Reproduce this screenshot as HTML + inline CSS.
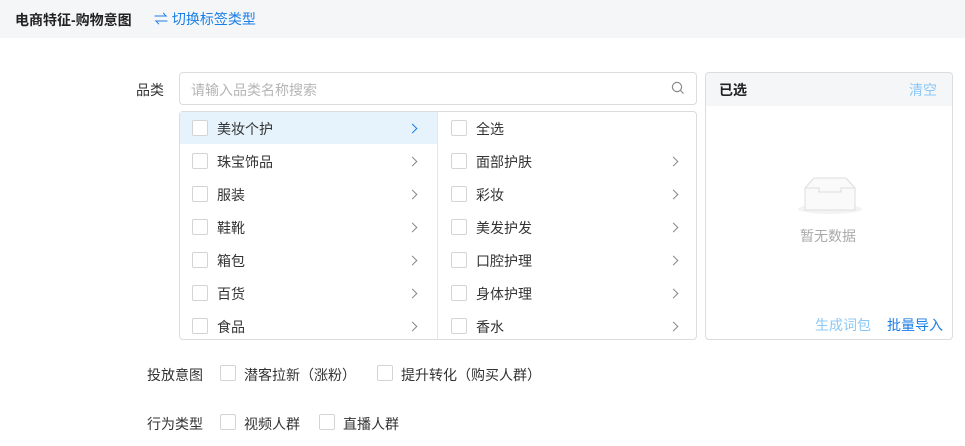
<!DOCTYPE html>
<html><head><meta charset="utf-8"><style>
*{margin:0;padding:0;box-sizing:border-box}
body{width:965px;height:446px;background:#fff;font-family:"Liberation Sans","Noto Sans CJK SC",sans-serif;font-size:14px;color:#333;position:relative;overflow:hidden}
.hdr{position:absolute;left:0;top:0;width:965px;height:38px;background:#f5f6f8}
.abs{position:absolute;white-space:nowrap}
.cb{position:absolute;width:16px;height:16px;border:1px solid #d4d4d4;border-radius:2px;background:#fff}
.arr{position:absolute;width:7px;height:7px;border-right:1.3px solid #888;border-top:1.3px solid #888;transform:rotate(45deg)}
</style></head><body>
<div class="hdr"></div>
<div class="abs" style="left:15px;top:10px;font-weight:bold;font-size:14px;color:#222">电商特征-购物意图</div>
<div class="abs" style="left:154px;top:9px;color:#1a7ee8;font-size:14px">⇌ 切换标签类型</div>
<div class="abs" style="left:136px;top:80px">品类</div>
<div class="abs" style="left:179px;top:72px;width:518px;height:33px;border:1px solid #dcdcdc;border-radius:4px"></div>
<div class="abs" style="left:191px;top:80px;color:#b5b5b5">请输入品类名称搜索</div>
<svg class="abs" style="left:671px;top:81px" width="14" height="14" viewBox="0 0 14 14"><circle cx="6" cy="6" r="4.6" fill="none" stroke="#888" stroke-width="1.2"/><line x1="9.5" y1="9.5" x2="12.5" y2="12.5" stroke="#888" stroke-width="1.2"/></svg>
<div class="abs" style="left:179px;top:111px;width:518px;height:229px;border:1px solid #dcdcdc;border-radius:4px"></div>
<div class="abs" style="left:437px;top:112px;width:1px;height:227px;background:#e6e6e6"></div>
<div class="abs" style="left:180px;top:112px;width:257px;height:32px;background:#e6f3fc"></div>
<div id="rows"></div>
<div class="abs" style="left:705px;top:72px;width:248px;height:268px;border:1px solid #dcdcdc;border-radius:4px;overflow:hidden"><div style="height:33px;background:#f5f6f8"></div></div>
<div class="abs" style="left:719px;top:80px;font-weight:bold;color:#222">已选</div>
<div class="abs" style="left:909px;top:80px;color:#8cc8f5">清空</div>
<svg class="abs" style="left:796px;top:175px" width="68" height="40" viewBox="0 0 68 40"><ellipse cx="34" cy="34" rx="32" ry="5" fill="#f3f3f3"/><path d="M9 13 L18 3 H50 L59 13 V35 H9 Z" fill="#fafafa" stroke="#ddd"/><path d="M9 13 H23 V17 H45 V13 H59" fill="none" stroke="#ddd"/></svg>
<div class="abs" style="left:800px;top:226px;color:#aaa">暂无数据</div>
<div class="abs" style="left:815px;top:315px;color:#8cc8f5">生成词包</div>
<div class="abs" style="left:887px;top:315px;color:#1a7ee8">批量导入</div>
<div class="abs" style="left:147px;top:365px">投放意图</div>
<div class="cb" style="left:220px;top:365px"></div><div class="abs" style="left:244px;top:365px">潜客拉新（涨粉）</div>
<div class="cb" style="left:377px;top:365px"></div><div class="abs" style="left:401px;top:365px">提升转化（购买人群）</div>
<div class="abs" style="left:147px;top:414px">行为类型</div>
<div class="cb" style="left:220px;top:414px"></div><div class="abs" style="left:244px;top:414px">视频人群</div>
<div class="cb" style="left:319px;top:414px"></div><div class="abs" style="left:343px;top:414px">直播人群</div>
<script>
var L=["美妆个护","珠宝饰品","服装","鞋靴","箱包","百货","食品"],R=["全选","面部护肤","彩妆","美发护发","口腔护理","身体护理","香水"],h="";
for(var i=0;i<7;i++){var y=112+i*33;
h+='<div class="cb" style="left:192px;top:'+(y+8)+'px"></div><div class="abs" style="left:217px;top:'+(y+7)+'px">'+L[i]+'</div><div class="arr" style="left:409px;top:'+(y+13)+'px;'+(i==0?'border-color:#1a7ee8':'')+'"></div>';
h+='<div class="cb" style="left:451px;top:'+(y+8)+'px"></div><div class="abs" style="left:476px;top:'+(y+7)+'px">'+R[i]+'</div>'+(i>0?'<div class="arr" style="left:670px;top:'+(y+13)+'px"></div>':'');}
document.getElementById("rows").outerHTML=h;
</script>
</body></html>
